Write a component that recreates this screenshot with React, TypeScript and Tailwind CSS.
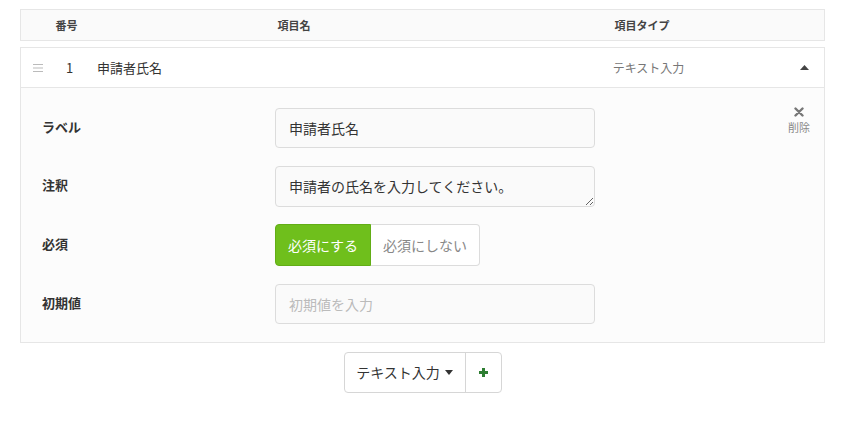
import React from "react";

const font = { fontFamily: '"Noto Sans CJK JP", "Noto Sans", sans-serif' };

function Row({ label, children }: { label: string; children: React.ReactNode }) {
  return (
    <div className="flex items-center h-10">
      <div className="w-[254px] pl-[21px] pb-[2px] text-[13px] font-bold text-[#333]">{label}</div>
      {children}
    </div>
  );
}

export default function App() {
  return (
    <div className="w-[850px] h-[428px] bg-white pt-[9px] pl-5 pr-[25px]" style={font}>
      {/* header */}
      <div className="flex items-center h-8 border border-[#e6e6e6] bg-[#fafafa] text-[11px] font-bold text-[#444]">
        <div className="w-[91px] text-center">番号</div>
        <div className="w-[364px] text-center">項目名</div>
        <div className="w-[332px] text-center">項目タイプ</div>
      </div>

      {/* item */}
      <div className="mt-[6px] border border-[#e6e6e6]">
        <div className="flex items-center h-10 bg-white border-b border-[#e6e6e6]">
          <div className="w-[33px] flex justify-start pl-[12px]">
            <svg width="10" height="8" viewBox="0 0 10 8">
              <rect x="0" y="0" width="10" height="1" fill="#bbb" />
              <rect x="0" y="3.5" width="10" height="1" fill="#bbb" />
              <rect x="0" y="7" width="10" height="1" fill="#bbb" />
            </svg>
          </div>
          <div className="w-[43px] pl-[12px] text-[13px] text-[#333]">1</div>
          <div className="w-[473px] text-[13px] text-[#333]">申請者氏名</div>
          <div className="w-[157px] text-center text-[12px] text-[#777]">テキスト入力</div>
          <div className="flex-1 flex justify-end pr-[15px]">
            <svg width="9" height="5" viewBox="0 0 9 5">
              <path d="M0 5 L4.5 0 L9 5 Z" fill="#444" />
            </svg>
          </div>
        </div>

        <div className="relative bg-[#fcfcfc] pt-5 pb-[18px] flex flex-col gap-[18px]">
          <div className="absolute right-[14px] top-[19px] flex flex-col items-center text-[11px] text-[#888] leading-none">
            <svg width="10" height="10" viewBox="0 0 10 10" className="mb-[5px]">
              <path d="M1.5 1.5 L8.5 8.5 M8.5 1.5 L1.5 8.5" stroke="#777" strokeWidth="2.4" strokeLinecap="round" />
            </svg>
            削除
          </div>

          <Row label="ラベル">
            <input
              readOnly
              value="申請者氏名"
              className="w-[320px] h-10 rounded-[4px] border border-[#dcdcdc] bg-[#fafafa] px-[13px] text-[14px] text-[#333] outline-none"
              style={font}
            />
          </Row>
          <Row label="注釈">
            <textarea
              readOnly
              value="申請者の氏名を入力してください。"
              className="w-[320px] h-[41px] rounded-[4px] border border-[#dcdcdc] bg-[#fafafa] px-[13px] py-[9px] text-[14px] leading-[20px] text-[#333] outline-none resize-y overflow-hidden"
              style={font}
            />
          </Row>
          <div className="flex items-center h-[42px]">
            <div className="w-[254px] pl-[21px] pb-[2px] text-[13px] font-bold text-[#333]">必須</div>
            <div className="flex h-[42px]">
              <div className="w-[96px] flex items-center justify-center rounded-l-[4px] bg-[#6fbf1c] border border-[#62ad16] text-white text-[14px]">
                必須にする
              </div>
              <div className="w-[109px] flex items-center justify-center rounded-r-[4px] bg-white border border-l-0 border-[#dcdcdc] text-[#888] text-[14px]">
                必須にしない
              </div>
            </div>
          </div>
          <Row label="初期値">
            <input
              readOnly
              placeholder="初期値を入力"
              className="w-[320px] h-10 rounded-[4px] border border-[#dcdcdc] bg-[#fafafa] px-[13px] text-[14px] text-[#333] placeholder:text-[#bbb] outline-none"
              style={font}
            />
          </Row>
        </div>
      </div>

      {/* add button */}
      <div className="flex justify-center mt-[9px]">
        <div className="flex h-[41px] rounded-[4px] border border-[#d6d6d6] bg-white">
          <div className="w-[121px] flex items-center justify-center gap-[5px] text-[14px] text-[#333] border-r border-[#d6d6d6]">
            テキスト入力
            <svg width="8" height="5" viewBox="0 0 8 5">
              <path d="M0 0 L8 0 L4 5 Z" fill="#333" />
            </svg>
          </div>
          <div className="w-[35px] flex items-center justify-center">
            <svg width="11" height="11" viewBox="0 0 11 11">
              <path d="M5.5 1 V10 M1 5.5 H10" stroke="#2e7d32" strokeWidth="3" />
            </svg>
          </div>
        </div>
      </div>
    </div>
  );
}
